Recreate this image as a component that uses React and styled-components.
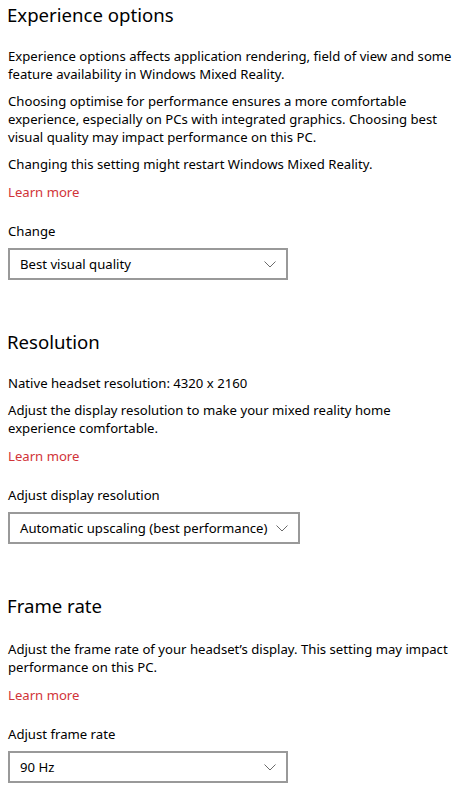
import React from 'react';
import styled, { createGlobalStyle } from 'styled-components';

const GlobalStyle = createGlobalStyle`
  html, body {
    margin: 0;
    padding: 0;
    background: #ffffff;
  }
  body {
    font-family: "Noto Sans", "Open Sans", sans-serif;
    color: #000000;
    -webkit-font-smoothing: antialiased;
  }
`;

const Page = styled.main`
  padding: 0 0 24px 8px;
  width: 461px;
  box-sizing: border-box;
`;

const Section = styled.section`
  display: flex;
  flex-direction: column;
  align-items: flex-start;

  & + & {
    margin-top: 47px;
  }
`;

const Heading = styled.h2`
  margin: 0 0 ${props => props.$space || 17}px -1px;
  font-size: 18.6px;
  font-weight: 400;
  line-height: 30px;
`;

const Text = styled.p`
  margin: 0;
  font-size: 13.15px;
  line-height: 18px;
  white-space: nowrap;

  & + & {
    margin-top: 9px;
  }
`;

const LearnMore = styled.a`
  margin-top: 10px;
  font-size: 13.15px;
  line-height: 18px;
  color: #d13438;
  text-decoration: none;
  cursor: pointer;
`;

const Label = styled.label`
  margin-top: 21px;
  font-size: 13.15px;
  line-height: 18px;
`;

const Select = styled.button`
  margin-top: 8px;
  width: ${props => props.$width}px;
  height: 32px;
  box-sizing: border-box;
  display: flex;
  align-items: center;
  justify-content: space-between;
  padding: 0 10px;
  border: 2px solid #999999;
  background: #ffffff;
  font-family: inherit;
  font-size: 13.15px;
  color: #000000;
  cursor: pointer;
`;

const Chevron = () => (
  <svg width="12" height="7" viewBox="0 0 12 7" aria-hidden="true">
    <polyline points="0.5,0.5 6,6 11.5,0.5" fill="none" stroke="#6b6b6b" strokeWidth="1" />
  </svg>
);

const Dropdown = ({ value, width = 280 }) => (
  <Select $width={width}>
    <span>{value}</span>
    <Chevron />
  </Select>
);

const App = () => (
  <>
    <GlobalStyle />
    <Page>
      <Section>
        <Heading>Experience options</Heading>
        <Text>
          Experience options affects application rendering, field of view and some<br />
          feature availability in Windows Mixed Reality.
        </Text>
        <Text>
          Choosing optimise for performance ensures a more comfortable<br />
          experience, especially on PCs with integrated graphics. Choosing best<br />
          visual quality may impact performance on this PC.
        </Text>
        <Text>Changing this setting might restart Windows Mixed Reality.</Text>
        <LearnMore>Learn more</LearnMore>
        <Label>Change</Label>
        <Dropdown value="Best visual quality" />
      </Section>

      <Section>
        <Heading>Resolution</Heading>
        <Text>Native headset resolution: 4320 x 2160</Text>
        <Text>
          Adjust the display resolution to make your mixed reality home<br />
          experience comfortable.
        </Text>
        <LearnMore>Learn more</LearnMore>
        <Label>Adjust display resolution</Label>
        <Dropdown value="Automatic upscaling (best performance)" width={292} />
      </Section>

      <Section>
        <Heading $space={19}>Frame rate</Heading>
        <Text>
          Adjust the frame rate of your headset’s display. This setting may impact<br />
          performance on this PC.
        </Text>
        <LearnMore>Learn more</LearnMore>
        <Label>Adjust frame rate</Label>
        <Dropdown value="90 Hz" />
      </Section>
    </Page>
  </>
);

export default App;
